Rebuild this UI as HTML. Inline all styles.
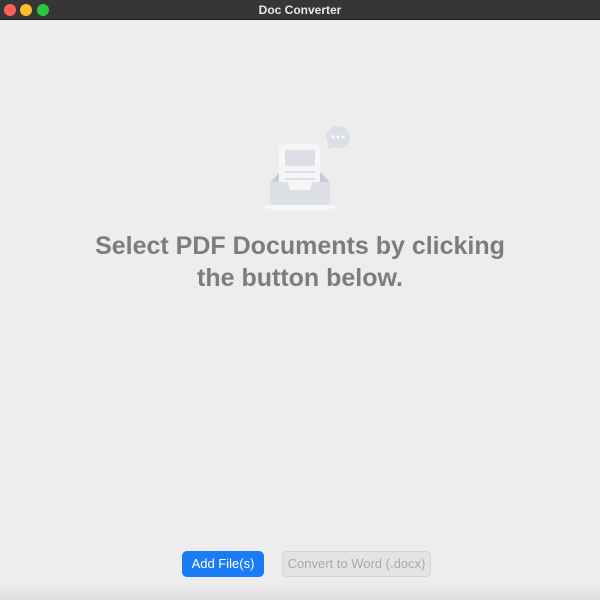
<!DOCTYPE html>
<html><head><meta charset="utf-8"><style>
*{margin:0;padding:0;box-sizing:border-box}
body{width:600px;height:600px;overflow:hidden;background:#ededed;font-family:"Liberation Sans",Arial,sans-serif;position:relative}
.tb{position:absolute;left:0;top:0;width:600px;height:20px;background:#363636;border-bottom:1px solid #1e1e1e}
.tb .t{position:absolute;left:0;right:0;top:3px;text-align:center;color:#e8e8e8;font-weight:bold;font-size:12px}
.dot{position:absolute;top:4px;width:12px;height:12px;border-radius:50%}
.bot{position:absolute;left:0;top:584px;width:600px;height:16px;background:linear-gradient(#ededed,#dcdcdc)}
h1{position:absolute;left:0;right:0;top:230px;text-align:center;font-size:25px;line-height:32px;color:#7d7d7d;font-weight:bold}
.b{position:absolute;top:551px;height:26px;border-radius:5px;font-size:13px;text-align:center;line-height:26px}
</style></head><body>
<div class="tb"><div class="dot" style="left:4px;background:#fe5f57"></div><div class="dot" style="left:20px;background:#febc2e"></div><div class="dot" style="left:37px;background:#28c840"></div><div class="t">Doc Converter</div></div>
<svg style="position:absolute;left:250px;top:120px" width="110" height="100" viewBox="0 0 110 100">
<ellipse cx="50" cy="87" rx="36" ry="4" fill="#f7f7f7"/>
<path d="M20 62 L30 52 L70 52 L80 62 Z" fill="#c9ccd3"/>
<rect x="29" y="24" width="41" height="50" rx="2" fill="#f6f6f7"/>
<rect x="35" y="30" width="30" height="16" fill="#dcdfe5"/>
<rect x="35" y="51" width="30" height="2" fill="#dcdfe5"/>
<rect x="35" y="58" width="30" height="2" fill="#dcdfe5"/>
<path d="M20 62 L38 62 L40 70 L60 70 L62 62 L80 62 L80 82 Q80 85 77 85 L23 85 Q20 85 20 82 Z" fill="#dcdfe5"/>
<path d="M88 6 a12 11 0 1 1 -5 21 l-6 3 l2 -6 a12 11 0 0 1 9 -18 z" fill="#dcdfe5"/>
<circle cx="83" cy="17" r="1.5" fill="#fff"/><circle cx="88" cy="17" r="1.5" fill="#fff"/><circle cx="93" cy="17" r="1.5" fill="#fff"/>
</svg>
<h1>Select PDF Documents by clicking<br>the button below.</h1>
<div class="b" style="left:182px;width:82px;background:#1a7bf6;color:#fff">Add File(s)</div>
<div class="b" style="left:282px;width:149px;background:#e4e4e4;border:1px solid #d6d6d6;color:#a9a9a9;line-height:24px">Convert to Word (.docx)</div>
<div class="bot"></div>
</body></html>
